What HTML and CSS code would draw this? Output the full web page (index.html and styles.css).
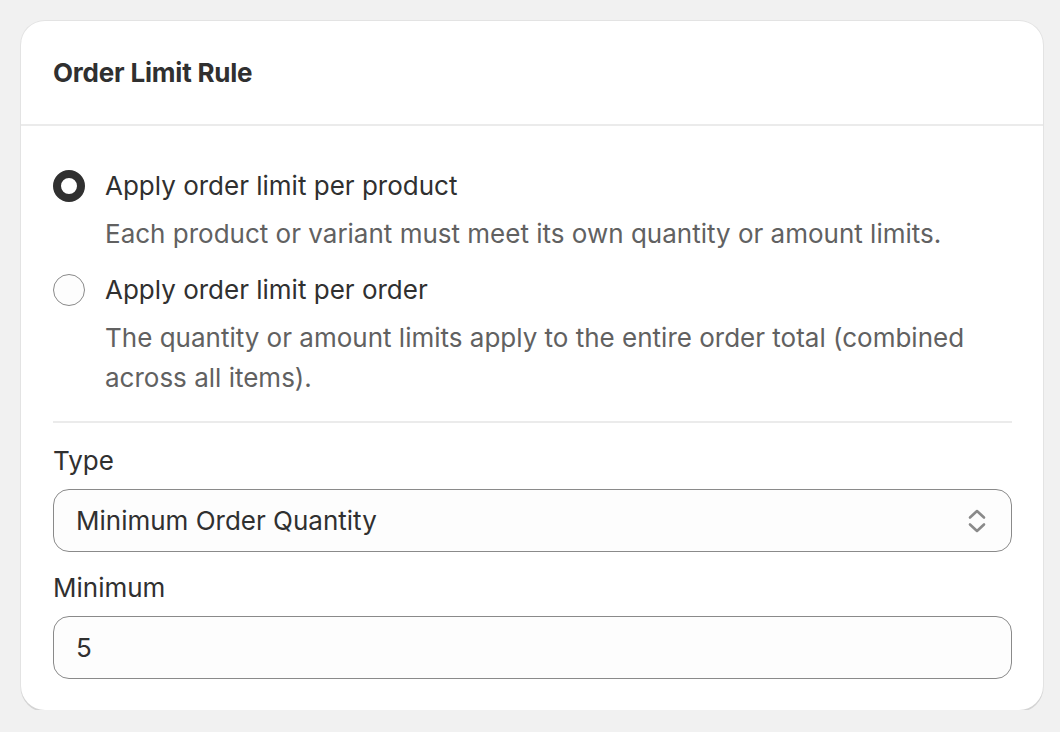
FILE: index.html
```html
<!DOCTYPE html>
<html>
<head>
<meta charset="utf-8">
<link rel="stylesheet" href="styles.css">
</head>
<body>
<div class="card">
  <div class="card-header">
    <h2 class="title">Order Limit Rule</h2>
  </div>
  <div class="card-body">
    <div class="choices">
      <label class="choice">
        <span class="radio checked"></span>
        <span class="choice-text">
          <span class="choice-label">Apply order limit per product</span>
          <span class="choice-help">Each product or variant must meet its own quantity or amount limits.</span>
        </span>
      </label>
      <label class="choice">
        <span class="radio"></span>
        <span class="choice-text">
          <span class="choice-label">Apply order limit per order</span>
          <span class="choice-help">The quantity or amount limits apply to the entire order total (combined across all items).</span>
        </span>
      </label>
    </div>
    <div class="divider"></div>
    <div class="field">
      <div class="field-label">Type</div>
      <div class="control select">
        <span class="value">Minimum Order Quantity</span>
        <svg class="chev" width="20" height="28" viewBox="0 0 20 28">
          <path d="M3 10.5 L10 4 L17 10.5" fill="none" stroke="#8a8a8a" stroke-width="2.6" stroke-linecap="round" stroke-linejoin="round"/>
          <path d="M3 17.5 L10 24 L17 17.5" fill="none" stroke="#8a8a8a" stroke-width="2.6" stroke-linecap="round" stroke-linejoin="round"/>
        </svg>
      </div>
    </div>
    <div class="field">
      <div class="field-label">Minimum</div>
      <div class="control input">
        <span class="value">5</span>
      </div>
    </div>
  </div>
</div>
</body>
</html>
```
FILE: styles.css
```css
html, body {
  margin: 0;
  padding: 0;
  background: #f1f1f1;
}
body {
  padding: 21px 17px 0 21px;
  font-family: Inter, "Noto Sans", sans-serif;
  color: #303030;
  font-size: 26px;
  line-height: 40px;
}
.card {
  background: #ffffff;
  border-radius: 24px;
  box-shadow: 0 2px 0 0 #d4d4d4, 0 0 0 1px #e3e3e3;
  width: 1022px;
}
.card-header {
  padding: 32px 32px 31px;
  border-bottom: 2px solid #ebebeb;
}
.title {
  margin: 0;
  font-size: 26px;
  font-weight: 650;
  line-height: 40px;
  letter-spacing: -0.2px;
}
.card-body {
  padding: 40px 31px 31px 32px;
  display: flex;
  flex-direction: column;
}
.choices {
  display: flex;
  flex-direction: column;
  gap: 16px;
}
.choice {
  display: flex;
  align-items: flex-start;
  gap: 20px;
}
.radio {
  flex: none;
  width: 32px;
  height: 32px;
  box-sizing: border-box;
  border-radius: 50%;
  border: 1.5px solid #8a8a8a;
  background: #fdfdfd;
  margin-top: 4px;
}
.radio.checked {
  border: 8px solid #303030;
  background: #fff;
}
.choice-text {
  display: flex;
  flex-direction: column;
  gap: 8px;
}
.choice-label {
  color: #303030;
}
.choice-help {
  color: #616161;
  max-width: 880px;
}
.divider {
  height: 2px;
  background: #ebebeb;
  margin: 23px 0 18px;
}
.field {
  display: flex;
  flex-direction: column;
  gap: 8px;
}
.field + .field {
  margin-top: 16px;
}
.field-label {
  color: #303030;
}
.control {
  box-sizing: border-box;
  height: 63px;
  border: 1.5px solid #8a8a8a;
  border-radius: 16px;
  background: #fdfdfd;
  display: flex;
  align-items: center;
  padding: 0 22px;
}
.select {
  justify-content: space-between;
  padding-right: 24px;
}
.value {
  color: #303030;
}
.chev {
  display: block;
}
```
